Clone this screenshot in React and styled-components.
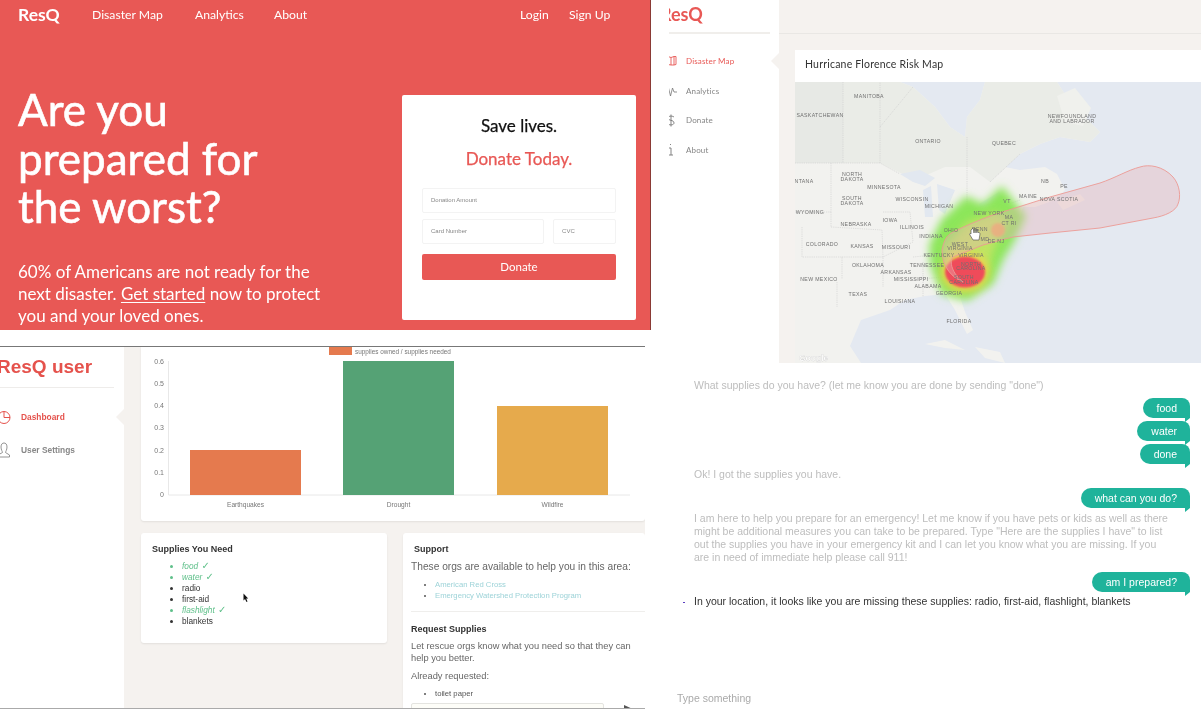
import React from 'react';
import styled, { createGlobalStyle } from 'styled-components';

const RED = '#e85855';
const PAGE = '#f5f2ef';
const TEAL = '#1fb39b';
const GEO = '"Lato", "Noto Sans", sans-serif';
const ARIAL = '"Liberation Sans", Arial, sans-serif';

const Global = createGlobalStyle`
  html, body { margin: 0; padding: 0; background: #fff; }
  #root { width: 1201px; height: 709px; overflow: hidden; }
`;

// the picture is a collage of four screenshots, each one placed like a window on a desktop
const Canvas = styled.div`
  position: relative;
  width: 1201px;
  height: 709px;
  overflow: hidden;
  background: #fff;
`;

const Shot = styled.section`
  position: absolute;
  left: ${(p) => p.$x}px;
  top: ${(p) => p.$y}px;
  width: ${(p) => p.$w}px;
  height: ${(p) => p.$h}px;
  overflow: hidden;
  box-sizing: border-box;
  filter: blur(0.45px);
`;

/* landing */
const Landing = styled(Shot)`
  background: ${RED};
  color: #fff;
  font-family: ${GEO};
  border-right: 1px solid #8a3a35;
  padding: 0 18px;
`;
const TopNav = styled.nav`
  display: flex;
  align-items: center;
  height: 28px;
  font-size: 12.2px;
`;
const Brand = styled.div`
  font-size: 17.5px;
  font-weight: 700;
  width: 74px;
`;
const TopLink = styled.a`
  width: ${(p) => p.$w}px;
  white-space: nowrap;
`;
const HeroRow = styled.div`
  display: flex;
  justify-content: space-between;
  padding-top: 57px;
`;
const HeroText = styled.div`
  width: 330px;
`;
const Headline = styled.h1`
  margin: 0;
  font-size: 44px;
  font-weight: 400;
  line-height: 48.5px;
  -webkit-text-stroke: 0.6px #fff;
`;
const Lead = styled.p`
  margin: 30px 0 0;
  font-size: 17px;
  line-height: 22px;
  white-space: nowrap;
  u { text-underline-offset: 2px; }
`;
const DonateCard = styled.div`
  box-sizing: border-box;
  flex: none;
  width: 234px;
  height: 225px;
  margin: 10px -4px 0 0;
  padding: 21px 20px 0;
  background: #fff;
  border-radius: 2px;
  text-align: center;
`;
const DonateTitle = styled.div`
  font-size: 17px;
  line-height: 20px;
  -webkit-text-stroke: 0.25px ${(p) => (p.$red ? RED : '#111')};
  color: ${(p) => (p.$red ? RED : '#111')};
  margin-bottom: ${(p) => (p.$red ? 19 : 13)}px;
`;
const FieldRow = styled.div`
  display: flex;
  gap: 9px;
  margin-bottom: 6px;
`;
const Field = styled.div`
  box-sizing: border-box;
  flex: ${(p) => p.$flex || 1};
  min-width: 0;
  height: 25px;
  padding-left: 8px;
  border: 1px solid #f3f3f3;
  border-radius: 2px;
  font: 6px/23px ${ARIAL};
  color: #888;
  text-align: left;
`;
const DonateButton = styled.div`
  height: 26px;
  margin-top: 10px;
  background: ${RED};
  border-radius: 2px;
  color: #fff;
  font-size: 11.5px;
  line-height: 26px;
`;

/* map dashboard */
const MapShot = styled(Shot)`
  display: flex;
  background: ${PAGE};
  font-family: ${GEO};
`;
const MapSide = styled.aside`
  position: relative;
  width: 128px;
  flex: none;
  background: #fff;
  padding-left: 18px;
  box-sizing: border-box;
`;
const ClipCol = styled.div`
  width: 101px;
  overflow: hidden;
`;
const MapLogo = styled.div`
  height: 34px;
  margin-left: -9px;
  border-bottom: 2px solid #f0eeeb;
  width: 112px;
  box-sizing: border-box;
  font-size: 18px;
  font-weight: 700;
  line-height: 28px;
  color: ${RED};
`;
const MapNav = styled.div`
  padding-top: 12px;
`;
const MapNavRow = styled.div`
  display: flex;
  align-items: center;
  gap: 8px;
  height: 29.7px;
  margin-left: -1px;
  font-size: 8px;
  letter-spacing: 0.15px;
  color: ${(p) => (p.$active ? RED : '#858585')};
  svg { flex: none; }
`;
const Notch = styled.span`
  position: absolute;
  right: 0;
  top: ${(p) => p.$top}px;
  width: 0;
  height: 0;
  border-style: solid;
  border-width: 8px 8px 8px 0;
  border-color: transparent ${PAGE} transparent transparent;
`;
const MapMain = styled.main`
  flex: 1;
  min-width: 0;
`;
const MapHeader = styled.div`
  height: 34px;
  border-bottom: 1px solid #e9e7e4;
  box-sizing: border-box;
  margin-bottom: 16px;
`;
const MapCard = styled.div`
  margin-left: 16px;
  background: #fff;
`;
const MapTitle = styled.div`
  height: 32px;
  padding-left: 10px;
  font-size: 10.5px;
  line-height: 29px;
  letter-spacing: 0.2px;
  color: #333;
`;
const MapLabels = styled.g`
  font: 5.2px ${ARIAL};
  letter-spacing: 0.35px;
  fill: #6f6f6f;
  text-anchor: middle;
`;

/* supplies dashboard */
const UserShot = styled(Shot)`
  display: flex;
  font-family: ${ARIAL};
  background: ${PAGE};
  border-top: 1px solid #777;
  border-bottom: 1px solid #aaa;
`;
const UserSide = styled.aside`
  position: relative;
  width: 124px;
  flex: none;
  background: #fff;
  overflow: hidden;
`;
const UserLogo = styled.div`
  box-sizing: border-box;
  width: 114px;
  height: 41px;
  padding-top: 6px;
  border-bottom: 1px solid #eeecea;
  margin-bottom: 19px;
  font-size: 19px;
  font-weight: 700;
  line-height: 28px;
  white-space: nowrap;
  text-indent: -3px;
  color: #e5524c;
`;
const UserNavRow = styled.div`
  display: flex;
  align-items: center;
  gap: 7px;
  height: 20px;
  margin-bottom: 13px;
  margin-left: -1px;
  font-size: 8.4px;
  font-weight: 700;
  color: ${(p) => (p.$active ? '#e5524c' : '#888')};
`;
const UserMain = styled.main`
  flex: 1;
  min-width: 0;
  padding-left: 17px;
`;
const ChartCard = styled.div`
  height: 174px;
  background: #fff;
  border-radius: 0 0 3px 3px;
  box-shadow: 0 1px 2px rgba(0, 0, 0, 0.08);
  margin-bottom: 12px;
`;
const ChartText = styled.text`
  font: ${(p) => p.$size || 7}px ${ARIAL};
  fill: #777;
  text-anchor: ${(p) => p.$anchor || 'middle'};
`;
const CardRow = styled.div`
  display: flex;
  align-items: flex-start;
  gap: 16px;
`;
const WhiteCard = styled.div`
  box-sizing: border-box;
  width: ${(p) => p.$w}px;
  flex: none;
  height: ${(p) => p.$h}px;
  padding: ${(p) => p.$pad};
  background: #fff;
  border-radius: 3px;
  box-shadow: 0 1px 2px rgba(0, 0, 0, 0.08);
  position: relative;
`;
const CardHead = styled.h4`
  margin: 0 0 ${(p) => p.$mb || 8}px;
  font-size: 9px;
  line-height: 11px;
  font-weight: 700;
  color: #333;
  padding-left: ${(p) => p.$pl || 0}px;
`;
const SupplyList = styled.ul`
  margin: 0;
  padding: 0 0 0 30px;
  font-size: 8.3px;
  line-height: 11px;
  color: #333;
`;
const Supply = styled.li`
  color: ${(p) => (p.$have ? '#5fc08a' : '#333')};
  font-style: ${(p) => (p.$have ? 'italic' : 'normal')};
`;
const Tick = styled.span`
  font-style: normal;
  font-family: "DejaVu Sans", sans-serif;
  font-size: 10px;
  line-height: 10px;
  margin-left: 1px;
`;
const Body = styled.p`
  margin: 0 0 ${(p) => p.$mb || 6}px;
  font-size: ${(p) => p.$size || 9.3}px;
  line-height: 12px;
  color: #666;
`;
const OrgList = styled.ul`
  margin: 0;
  padding: 0 0 0 24px;
  font-size: 7.7px;
  line-height: 11px;
  color: #555;
`;
const OrgLink = styled.a`
  color: #9dd3d8;
`;
const Rule = styled.hr`
  border: 0;
  border-top: 1px solid #efeeec;
  margin: 10px 0 12px;
`;
const RequestInput = styled.div`
  position: absolute;
  left: 8px;
  top: 170px;
  width: 191px;
  height: 20px;
  border: 1px solid #e4e4e0;
  border-radius: 2px;
  background: #fdfdf8;
`;
const Pointer = styled.svg`
  position: absolute;
  left: ${(p) => p.$x}px;
  top: ${(p) => p.$y}px;
`;

/* chat */
const ChatShot = styled(Shot)`
  background: #fff;
  font-family: ${ARIAL};
  font-size: 10.5px;
  line-height: 13.3px;
  color: #bbb;
  padding: 16px 11px 0 49px;
`;
const BotLine = styled.div`
  position: relative;
  width: ${(p) => p.$w || 'auto'};
  margin: ${(p) => p.$m || '0'};
  color: ${(p) => (p.$dark ? '#333' : '#bdbdbd')};
`;
const Bubble = styled.div`
  position: relative;
  align-self: flex-end;
  box-sizing: border-box;
  height: 20px;
  padding: 0 13px 0 14px;
  margin-top: ${(p) => p.$mt || 0}px;
  background: ${TEAL};
  color: #fff;
  line-height: 20px;
  border-radius: 10px 8px 0 10px;
  &::after {
    content: '';
    position: absolute;
    right: 0;
    top: 20px;
    border-style: solid;
    border-width: 0 0 4px 5px;
    border-color: transparent transparent transparent ${TEAL};
  }
`;
const ChatFlow = styled.div`
  display: flex;
  flex-direction: column;
`;
const TypeBox = styled.div`
  position: absolute;
  left: 32px;
  top: 329px;
  color: #aaa;
  font-size: 10.5px;
`;
const Dot = styled.span`
  position: absolute;
  left: -11px;
  top: 7px;
  width: 1.5px;
  height: 1.5px;
  background: #5a3fc0;
`;

const mapLabels = [
  ['MANITOBA', 74, 16], ['SASKATCHEWAN', 25, 35], ['ONTARIO', 133, 61], ['QUEBEC', 209, 63],
  ['NEWFOUNDLAND', 277, 36], ['AND LABRADOR', 277, 41], ['NTANA', 9, 101], ['NORTH', 57, 94],
  ['DAKOTA', 57, 99], ['MINNESOTA', 89, 107], ['WISCONSIN', 117, 119], ['MICHIGAN', 144, 126],
  ['SOUTH', 57, 118], ['DAKOTA', 57, 123], ['WYOMING', 15, 132], ['NEBRASKA', 61, 144],
  ['IOWA', 95, 140], ['ILLINOIS', 117, 147], ['INDIANA', 136, 156], ['OHIO', 156, 150],
  ['NEW YORK', 194, 133], ['VT', 212, 121], ['MAINE', 233, 116], ['NB', 250, 101], ['PE', 269, 106],
  ['NOVA SCOTIA', 264, 119], ['PENN', 185, 149], ['COLORADO', 27, 164], ['KANSAS', 67, 166],
  ['MISSOURI', 101, 167], ['KENTUCKY', 144, 175], ['WEST', 165, 164], ['VIRGINIA', 165, 168],
  ['VIRGINIA', 176, 175], ['MD', 190, 159], ['DE NJ', 201, 161], ['MA', 214, 137], ['CT RI', 214, 143],
  ['OKLAHOMA', 73, 185], ['TENNESSEE', 132, 185], ['ARKANSAS', 101, 192], ['MISSISSIPPI', 116, 199],
  ['NORTH', 176, 184], ['CAROLINA', 176, 188], ['SOUTH', 169, 197], ['CAROLINA', 169, 202],
  ['NEW MEXICO', 24, 199], ['ALABAMA', 133, 206], ['GEORGIA', 154, 213], ['TEXAS', 63, 214],
  ['LOUISIANA', 105, 221], ['FLORIDA', 164, 241],
];

// hand drawn map of eastern north america with the storm cone and heat blobs
const RiskMap = () => (
  <svg width="406" height="281" viewBox="0 0 406 281" style={{ display: 'block' }}>
    <defs>
      <filter id="soft" x="-30%" y="-30%" width="160%" height="160%"><feGaussianBlur stdDeviation="4.5" /></filter>
      <filter id="softer" x="-30%" y="-30%" width="160%" height="160%"><feGaussianBlur stdDeviation="4" /></filter>
      <filter id="edge" x="-30%" y="-30%" width="160%" height="160%"><feGaussianBlur stdDeviation="1" /></filter>
    </defs>
    <rect width="406" height="281" fill="#e4e9f1" />
    <path
      d="M0 0 L105 0 L118 5 L140 25 L155 45 L170 55 L172 35 L185 18 L190 0 L262 0 L275 20 L290 35 L305 50 L295 60 L265 55 L245 62 L225 72 L210 85 L225 88 L250 85 L262 92 L270 108 L260 118 L240 125 L228 125 L225 135 L214 146 L205 158 L200 170 L192 178 L185 190 L172 205 L165 215 L170 230 L178 248 L172 252 L160 228 L150 212 L130 214 L110 218 L95 228 L66 238 L55 264 L66 281 L0 281 Z"
      fill="#f2f2ef"
    />
    <path d="M0 0 L105 0 L118 5 L140 25 L155 45 L170 55 L172 35 L185 18 L190 0 L262 0 L275 20 L290 35 L305 50 L295 60 L265 55 L245 62 L225 72 L195 100 L175 85 L150 85 L120 98 L85 81 L0 81 Z" fill="#eaece7" />
    <path d="M0 0 L48 0 L48 81 L0 81 Z" fill="#e7e9e5" />
    <path d="M262 14 L280 6 L296 26 L288 44 L270 40 Z" fill="#f0f1ed" />
    <path d="M262 120 L285 112 L290 118 L268 128 Z" fill="#f0f1ed" />
    <path d="M105 92 L125 88 L140 96 L130 104 L118 100 Z M128 108 L136 104 L138 135 L130 135 Z M142 102 L160 108 L150 132 L144 128 Z M150 140 L178 128 L180 134 L156 146 Z M184 122 L204 110 L208 116 L186 128 Z" fill="#e2e8f0" />
    <path d="M130 262 L150 258 L170 268 L150 266 Z M180 265 L205 270 L210 281 L190 276 Z" fill="#f2f2ef" />
    <g fill="none" stroke="#cdcdcd" strokeWidth="0.6" strokeDasharray="1.2 1">
      <path d="M0 81 L85 81 L105 92 M85 81 L85 0 M48 0 L48 81 M85 45 L118 5 M172 55 L172 130 M195 100 L225 72" />
      <path d="M36 81 L36 130 L0 130 M36 130 L36 145 M36 145 L87 148 L88 175 M7 145 L7 175 L47 175 L47 197 M47 175 L88 175 L88 205 M88 130 L115 130 L118 160 L88 175 M42 200 L42 225 M118 175 L170 170 M110 198 L150 195 M128 180 L128 215 M152 190 L170 200 M155 145 L205 125 M205 125 L225 118" />
    </g>
    <path
      d="M134 163 L146 138 L171 114 L188 122 L207 104 L231 134 L219 160 L208 178 L198 202 L172 219 L146 212 L135 183 Z"
      fill="#8ce65a"
      filter="url(#soft)"
    />
    <path d="M150 165 L172 140 L200 130 L214 138 L202 160 L192 190 L172 203 L153 196 Z" fill="#d4e468" opacity="0.7" filter="url(#softer)" />
    <ellipse cx="170" cy="190" rx="24" ry="20" fill="#f4d24a" opacity="0.9" filter="url(#softer)" />
    <ellipse cx="203" cy="148" rx="7" ry="7" fill="#f0a860" opacity="0.85" filter="url(#edge)" />
    <ellipse cx="170" cy="190" rx="20" ry="15.5" fill="#ef4c5a" filter="url(#edge)" />
    <path
      d="M147 168 C149 158 152 153 158 150 C170 144 184 138 198 133 L255 115 L305 101 C320 96 333 88 345 85 C354 82 368 84 378 95 C385 103 386 115 383 122 C381 129 370 134 358 136 L305 146 L255 151 L218 155 C205 158 196 161 188 163 L158 175 C153 182 160 194 168 200 C158 196 147 186 147 168 Z"
      fill="#e7b4b8"
      fillOpacity="0.38"
      stroke="#ec9a94"
      strokeWidth="0.9"
    />
    <MapLabels>
      {mapLabels.map(([t, x, y], i) => (
        <text key={i} x={x} y={y}>{t}</text>
      ))}
    </MapLabels>
    <path d="M176 148 L176 152 C175 151 174 152 175 153 L178 158 L184 158 L185 152 C185 150 183 150 183 151 L182 147 L181 151 L180 146 L179 151 L178 146 Z" fill="#fff" stroke="#444" strokeWidth="0.6" />
    <text x="4" y="279" fontFamily={ARIAL} fontSize="8.5" fontWeight="700" fill="#fff" stroke="#c9c9c9" strokeWidth="0.25">Google</text>
  </svg>
);

const IconMap = () => (
  <svg width="10" height="11" viewBox="0 0 10 11" fill="none" stroke={RED} strokeWidth="0.9">
    <path d="M0 1.5 L3 2.5 L6 1.5 L8 1.5 L8 9.5 L6 10 L3 10 L0 9.5 Z M3 2.5 L3 10 M6 1.5 L6 10" />
  </svg>
);
const IconPulse = () => (
  <svg width="10" height="12" viewBox="0 0 10 12" fill="none" stroke="#777" strokeWidth="0.8">
    <path d="M0 1 L2.5 11 L4.5 3 L6 7 L9 7" />
  </svg>
);
const IconDollar = () => (
  <svg width="10" height="13" viewBox="0 0 10 13" fill="none" stroke="#777" strokeWidth="0.9">
    <path d="M6 3 C4 1.5 0 2 0 4 C0 7 6 5.5 6 9 C6 11 2 11.5 0 10 M3 0.5 L3 12.5" />
  </svg>
);
const IconInfo = () => (
  <svg width="10" height="12" viewBox="0 0 10 12" fill="none" stroke="#777" strokeWidth="0.9">
    <path d="M2 0.5 L3 0.5 M0.5 4 L3 4 L3 11 M0.5 11 L5 11" />
  </svg>
);
const IconPie = () => (
  <svg width="15" height="15" viewBox="0 0 15 15" fill="none" stroke="#e5524c" strokeWidth="1">
    <circle cx="5" cy="7.5" r="6" />
    <path d="M5 1.5 L5 7.5 L11 7.5" />
  </svg>
);
const IconUser = () => (
  <svg width="15" height="16" viewBox="0 0 15 16" fill="none" stroke="#888" strokeWidth="0.9">
    <path d="M2 5 C2 2 3.5 1 5 1 C6.5 1 8 2 8 5 C8 8 6.5 9.5 6.5 10.5 L10.5 13 L10.5 15 L-1 15 L-1 13 L3.5 10.5 C3.5 9.5 2 8 2 5 Z" />
  </svg>
);

const bars = [
  { x: 190, y: 104, h: 45, fill: '#e57a4e', label: 'Earthquakes' },
  { x: 343, y: 15, h: 134, fill: '#55a275', label: 'Drought' },
  { x: 497, y: 60, h: 89, fill: '#e6aa4c', label: 'Wildfire' },
];

// chart coordinates are the shot's own, the svg starts at x=141
const SupplyChart = () => (
  <svg width="504" height="174" viewBox="141 1 504 174" style={{ display: 'block' }}>
    <rect x="329" y="1" width="23" height="8" fill="#e57a4e" />
    <ChartText x="355" y="8" $anchor="start" $size="6.4">supplies owned / supplies needed</ChartText>
    {['0.6', '0.5', '0.4', '0.3', '0.2', '0.1', '0'].map((t, i) => (
      <ChartText key={t} x="164" y={17.5 + i * 22.33} $anchor="end" $size="7">{t}</ChartText>
    ))}
    <path d="M168.5 15 L168.5 149 L630 149" stroke="#e8e8e8" fill="none" />
    {bars.map((b) => (
      <g key={b.label}>
        <rect x={b.x} y={b.y} width="111" height={b.h} fill={b.fill} />
        <ChartText x={b.x + 55.5} y="161" $size="6.6">{b.label}</ChartText>
      </g>
    ))}
  </svg>
);

const App = () => (
  <Canvas>
    <Global />
    <Landing $x={0} $y={0} $w={651} $h={330}>
      <TopNav>
        <Brand>ResQ</Brand>
        <TopLink $w={103}>Disaster Map</TopLink>
        <TopLink $w={79}>Analytics</TopLink>
        <TopLink $w={246}>About</TopLink>
        <TopLink $w={49}>Login</TopLink>
        <TopLink $w={50}>Sign Up</TopLink>
      </TopNav>
      <HeroRow>
        <HeroText>
          <Headline>Are you<br />prepared for<br />the worst?</Headline>
          <Lead>
            60% of Americans are not ready for the<br />
            next disaster. <u>Get started</u> now to protect<br />
            you and your loved ones.
          </Lead>
        </HeroText>
        <DonateCard>
          <DonateTitle>Save lives.</DonateTitle>
          <DonateTitle $red>Donate Today.</DonateTitle>
          <FieldRow><Field>Donation Amount</Field></FieldRow>
          <FieldRow>
            <Field $flex={125}>Card Number</Field>
            <Field $flex={59}>CVC</Field>
          </FieldRow>
          <DonateButton>Donate</DonateButton>
        </DonateCard>
      </HeroRow>
    </Landing>

    <MapShot $x={651} $y={0} $w={550} $h={363}>
      <MapSide>
        <ClipCol>
          <MapLogo>ResQ</MapLogo>
          <MapNav>
            <MapNavRow $active><IconMap />Disaster Map</MapNavRow>
            <MapNavRow><IconPulse />Analytics</MapNavRow>
            <MapNavRow><IconDollar />Donate</MapNavRow>
            <MapNavRow><IconInfo />About</MapNavRow>
          </MapNav>
        </ClipCol>
        <Notch $top={53} />
      </MapSide>
      <MapMain>
        <MapHeader />
        <MapCard>
          <MapTitle>Hurricane Florence Risk Map</MapTitle>
          <RiskMap />
        </MapCard>
      </MapMain>
    </MapShot>

    <UserShot $x={0} $y={346} $w={645} $h={363}>
      <UserSide>
        <UserLogo>ResQ user</UserLogo>
        <UserNavRow $active><IconPie />Dashboard</UserNavRow>
        <UserNavRow><IconUser />User Settings</UserNavRow>
        <Notch $top={62} />
      </UserSide>
      <UserMain>
        <ChartCard><SupplyChart /></ChartCard>
        <CardRow>
          <WhiteCard $w={246} $h={110} $pad="11px 11px">
            <CardHead $mb={6}>Supplies You Need</CardHead>
            <SupplyList>
              <Supply $have>food <Tick>✓</Tick></Supply>
              <Supply $have>water <Tick>✓</Tick></Supply>
              <Supply>radio</Supply>
              <Supply>first-aid</Supply>
              <Supply $have>flashlight <Tick>✓</Tick></Supply>
              <Supply>blankets</Supply>
            </SupplyList>
            <Pointer $x={102} $y={60} width="6" height="10" viewBox="0 0 6 10">
              <path d="M0.5 0.5 L0.5 7.5 L2 6 L3.5 9 L4.5 8.5 L3.2 5.6 L5.2 5.6 Z" fill="#111" />
            </Pointer>
          </WhiteCard>
          <WhiteCard $w={242} $h={200} $pad="11px 0 0 8px">
            <CardHead $pl={3} $mb={6}>Support</CardHead>
            <Body $mb={5.5} $size={10.2}>These orgs are available to help you in this area:</Body>
            <OrgList>
              <li><OrgLink>American Red Cross</OrgLink></li>
              <li><OrgLink>Emergency Watershed Protection Program</OrgLink></li>
            </OrgList>
            <Rule />
            <CardHead $mb={5.5}>Request Supplies</CardHead>
            <Body $mb={5.7}>Let rescue orgs know what you need so that they can help you better.</Body>
            <Body $mb={6}>Already requested:</Body>
            <OrgList><li>toilet paper</li></OrgList>
            <RequestInput />
            <Pointer $x={221} $y={172} width="14" height="12" viewBox="0 0 14 12">
              <path d="M0 0 L13 6 L0 12 Z" fill="#555" />
            </Pointer>
          </WhiteCard>
        </CardRow>
      </UserMain>
    </UserShot>

    <ChatShot $x={645} $y={363} $w={556} $h={346}>
      <ChatFlow>
        <BotLine>What supplies do you have? (let me know you are done by sending "done")</BotLine>
        <Bubble $mt={6}>food</Bubble>
        <Bubble $mt={3}>water</Bubble>
        <Bubble $mt={3}>done</Bubble>
        <BotLine $m="4px 0 0">Ok! I got the supplies you have.</BotLine>
        <Bubble $mt={6}>what can you do?</Bubble>
        <BotLine $w="476px" $m="4px 0 0">
          I am here to help you prepare for an emergency! Let me know if you have pets or kids as well as there might be additional measures you can take to be prepared. Type "Here are the supplies I have" to list out the supplies you have in your emergency kit and I can let you know what you are missing. If you are in need of immediate help please call 911!
        </BotLine>
        <Bubble $mt={7}>am I prepared?</Bubble>
        <BotLine $dark $m="3px 0 0"><Dot />In your location, it looks like you are missing these supplies: radio, first-aid, flashlight, blankets</BotLine>
      </ChatFlow>
      <TypeBox>Type something</TypeBox>
    </ChatShot>
  </Canvas>
);

export default App;
